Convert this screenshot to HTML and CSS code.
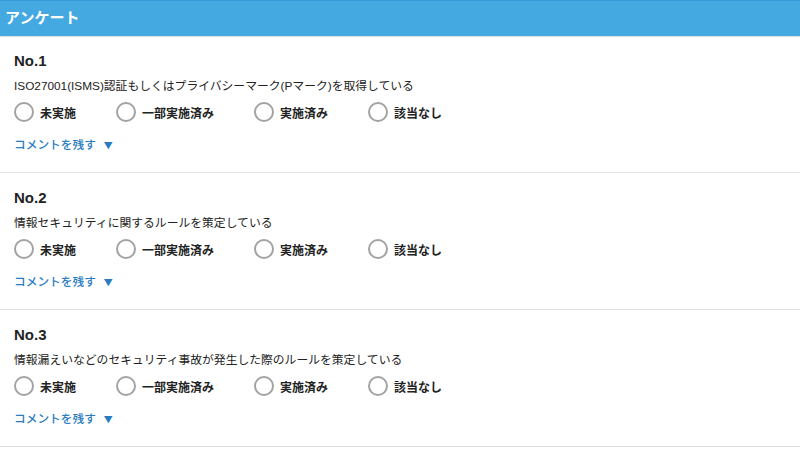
FILE: index.html
```html
<!DOCTYPE html>
<html lang="ja">
<head>
    <meta charset="UTF-8">
    <meta name="viewport" content="width=device-width, initial-scale=1.0">
    <title>アンケート</title>
    <link rel="stylesheet" href="styles.css">
</head>
<body>
    <header class="header">アンケート</header>

    <!-- Question 1 -->
    <section class="question">
        <h2 class="question-no">No.1</h2>
        <p class="question-text">ISO27001(ISMS)認証もしくはプライバシーマーク(Pマーク)を取得している</p>
        <div class="choices">
            <label class="choice"><input type="radio" name="q1"><span>未実施</span></label>
            <label class="choice"><input type="radio" name="q1"><span>一部実施済み</span></label>
            <label class="choice"><input type="radio" name="q1"><span>実施済み</span></label>
            <label class="choice"><input type="radio" name="q1"><span>該当なし</span></label>
        </div>
        <a href="#" class="comment">コメントを残す<span class="arrow">▼</span></a>
    </section>

    <!-- Question 2 -->
    <section class="question">
        <h2 class="question-no">No.2</h2>
        <p class="question-text">情報セキュリティに関するルールを策定している</p>
        <div class="choices">
            <label class="choice"><input type="radio" name="q2"><span>未実施</span></label>
            <label class="choice"><input type="radio" name="q2"><span>一部実施済み</span></label>
            <label class="choice"><input type="radio" name="q2"><span>実施済み</span></label>
            <label class="choice"><input type="radio" name="q2"><span>該当なし</span></label>
        </div>
        <a href="#" class="comment">コメントを残す<span class="arrow">▼</span></a>
    </section>

    <!-- Question 3 -->
    <section class="question">
        <h2 class="question-no">No.3</h2>
        <p class="question-text">情報漏えいなどのセキュリティ事故が発生した際のルールを策定している</p>
        <div class="choices">
            <label class="choice"><input type="radio" name="q3"><span>未実施</span></label>
            <label class="choice"><input type="radio" name="q3"><span>一部実施済み</span></label>
            <label class="choice"><input type="radio" name="q3"><span>実施済み</span></label>
            <label class="choice"><input type="radio" name="q3"><span>該当なし</span></label>
        </div>
        <a href="#" class="comment">コメントを残す<span class="arrow">▼</span></a>
    </section>
</body>
</html>
```

FILE: styles.css
```css
body {
    font-family: "Liberation Sans", "Noto Sans CJK JP", sans-serif;
    margin: 0;
    background-color: #fff;
    color: #222;
}

.header {
    height: 35px;
    line-height: 32px;
    padding: 0 5px;
    background-color: #44a8e1;
    border-top: 1px solid #3a9ad9;
    box-shadow: 0 1px 1px rgba(0, 0, 0, 0.12);
    color: white;
    font-size: 15px;
    font-weight: bold;
    font-family: "Noto Sans CJK JP", sans-serif;
}

.question {
    padding: 15px 14px 19px;
    border-bottom: 1px solid #e2e2e2;
}

.question-no {
    margin: 0;
    height: 20px;
    font-size: 15px;
    line-height: 20px;
    font-weight: bold;
}

.question-text {
    margin: 6px 0 0;
    height: 18px;
    font-size: 11.8px;
    line-height: 18px;
}

.choices {
    display: flex;
    gap: 40px;
    margin-top: 6px;
    height: 22px;
    align-items: center;
}

.choice {
    display: flex;
    align-items: center;
    gap: 6px;
    font-size: 12px;
    font-weight: bold;
    font-family: "Noto Sans CJK JP", sans-serif;
    cursor: pointer;
}

.choice input {
    appearance: none;
    -webkit-appearance: none;
    margin: 0;
    width: 20px;
    height: 20px;
    border: 2.5px solid #a3a3a3;
    border-radius: 50%;
    background: white;
    box-sizing: border-box;
}

.comment {
    display: block;
    margin-top: 12px;
    height: 18px;
    line-height: 18px;
    font-size: 11.7px;
    font-weight: 500;
    font-family: "Noto Sans CJK JP", sans-serif;
    color: #2b7bc1;
    text-decoration: none;
}

.arrow {
    margin-left: 8px;
    font-size: 9px;
}
```
